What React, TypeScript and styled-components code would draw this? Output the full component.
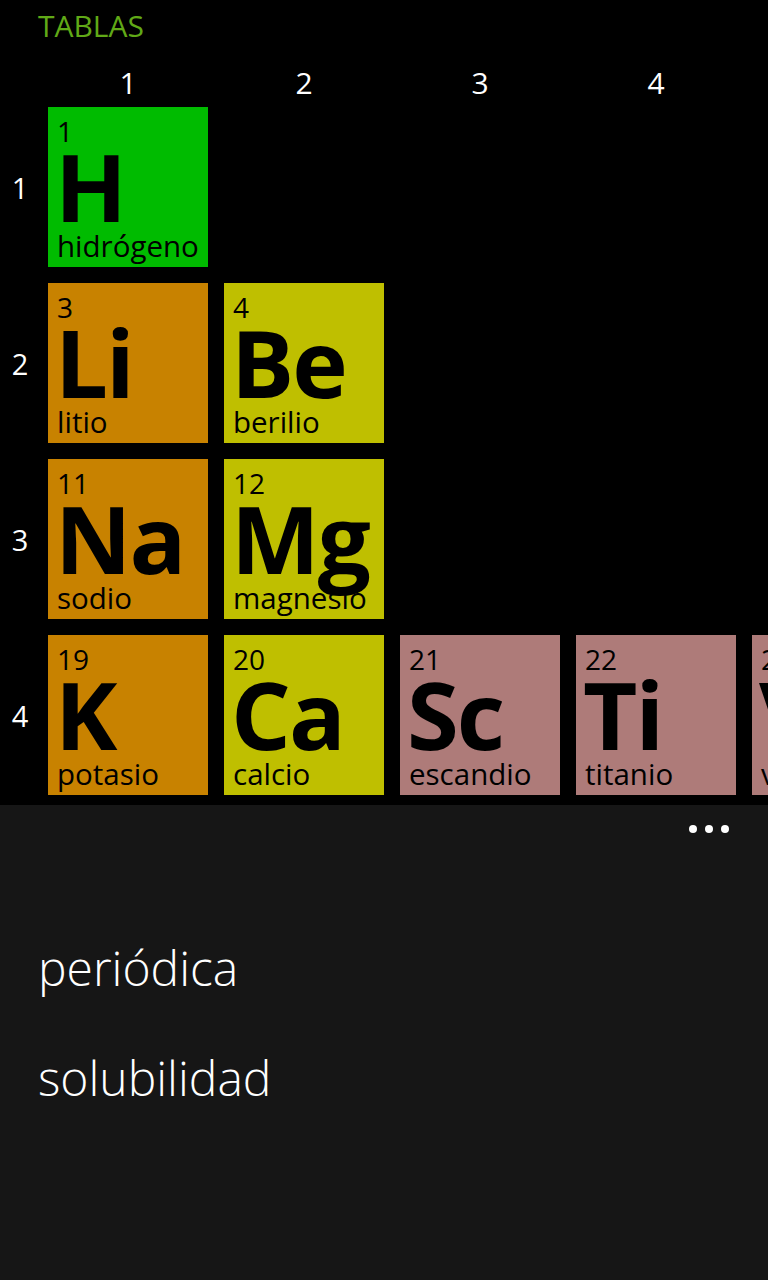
import styled, { createGlobalStyle } from 'styled-components';

const GlobalStyle = createGlobalStyle`
  html, body {
    margin: 0;
    padding: 0;
    background: #000;
  }
  body {
    font-family: "Open Sans", "Noto Sans", sans-serif;
    color: #fff;
  }
`;

// #region styled
const Page = styled.div`
  width: 768px;
  height: 1280px;
  display: flex;
  flex-direction: column;
  background: #000;
  overflow: hidden;
`;

const Title = styled.h1`
  margin: 0;
  padding: 6px 0 10px 38px;
  font-size: 30px;
  line-height: 40px;
  font-weight: 400;
  color: #60a917;
`;

const Table = styled.div`
  display: flex;
  flex-direction: column;
  overflow: hidden;
  padding-bottom: 10px;
`;

const HeaderRow = styled.div`
  display: flex;
  gap: 16px;
  padding-left: 48px;
  height: 51px;
`;

const ColLabel = styled.div`
  flex: 0 0 160px;
  text-align: center;
  font-size: 30px;
  line-height: 53px;
`;

const Rows = styled.div`
  display: flex;
  flex-direction: column;
  gap: 16px;
`;

const Row = styled.div`
  display: flex;
  align-items: center;
  gap: 16px;
  height: 160px;
`;

const RowLabel = styled.div`
  flex: 0 0 24px;
  padding: 2px 0 0 8px;
  text-align: center;
  font-size: 29px;
  line-height: 40px;
`;

const Tile = styled.div<{ $bg: string }>`
  flex: 0 0 160px;
  height: 160px;
  box-sizing: border-box;
  padding: 10px 0 0 9px;
  display: flex;
  flex-direction: column;
  background: ${p => p.$bg};
  color: #000;
  white-space: nowrap;
`;

const Number = styled.span`
  font-size: 28px;
  line-height: 28px;
`;

const Symbol = styled.span`
  margin: -6px 0 0 -2px;
  font-size: 94px;
  line-height: 95px;
  font-weight: 700;
  letter-spacing: -2px;
`;

const Name = styled.span`
  margin-top: -3px;
  font-size: 29.5px;
  line-height: 30px;
`;

const AppBar = styled.div`
  flex: 1;
  background: #161616;
  display: flex;
  flex-direction: column;
`;

const DotsRow = styled.div`
  display: flex;
  justify-content: flex-end;
  gap: 8px;
  padding: 20px 39px 0 0;
  height: 28px;
`;

const Dot = styled.span`
  width: 8px;
  height: 8px;
  border-radius: 50%;
  background: #fff;
`;

const Menu = styled.ul`
  list-style: none;
  margin: 0;
  padding: 60px 0 0 38px;
  display: flex;
  flex-direction: column;
`;

const MenuItem = styled.li`
  font-size: 48px;
  line-height: 110px;
  font-weight: 300;
`;
// #endregion

type Element = { n: number; s: string; name: string; bg: string };

const green = '#00bb00';
const alkali = '#c88200';
const earth = '#bfbf00';
const trans = '#ae7b79';

const rows: Element[][] = [
  [{ n: 1, s: 'H', name: 'hidrógeno', bg: green }],
  [
    { n: 3, s: 'Li', name: 'litio', bg: alkali },
    { n: 4, s: 'Be', name: 'berilio', bg: earth },
  ],
  [
    { n: 11, s: 'Na', name: 'sodio', bg: alkali },
    { n: 12, s: 'Mg', name: 'magnesio', bg: earth },
  ],
  [
    { n: 19, s: 'K', name: 'potasio', bg: alkali },
    { n: 20, s: 'Ca', name: 'calcio', bg: earth },
    { n: 21, s: 'Sc', name: 'escandio', bg: trans },
    { n: 22, s: 'Ti', name: 'titanio', bg: trans },
    { n: 23, s: 'V', name: 'vanadio', bg: trans },
  ],
];

const App = () => (
  <Page>
    <GlobalStyle />
    <Title>TABLAS</Title>
    <Table>
      <HeaderRow>
        {[1, 2, 3, 4, 5].map(c => (
          <ColLabel key={c}>{c}</ColLabel>
        ))}
      </HeaderRow>
      <Rows>
        {rows.map((row, i) => (
          <Row key={i}>
            <RowLabel>{i + 1}</RowLabel>
            {row.map(el => (
              <Tile key={el.n} $bg={el.bg}>
                <Number>{el.n}</Number>
                <Symbol>{el.s}</Symbol>
                <Name>{el.name}</Name>
              </Tile>
            ))}
          </Row>
        ))}
      </Rows>
    </Table>
    <AppBar>
      <DotsRow>
        <Dot />
        <Dot />
        <Dot />
      </DotsRow>
      <Menu>
        <MenuItem>periódica</MenuItem>
        <MenuItem>solubilidad</MenuItem>
      </Menu>
    </AppBar>
  </Page>
);

export default App;
